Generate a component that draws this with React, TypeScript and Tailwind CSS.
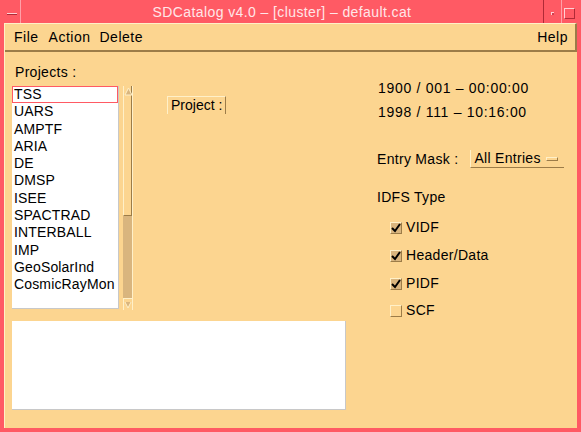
import React from "react";

const projects = [
  "TSS",
  "UARS",
  "AMPTF",
  "ARIA",
  "DE",
  "DMSP",
  "ISEE",
  "SPACTRAD",
  "INTERBALL",
  "IMP",
  "GeoSolarInd",
  "CosmicRayMon",
];

function Check({ checked, label, mt }: { checked: boolean; label: string; mt: string }) {
  return (
    <div className={`flex items-center h-[17px] ${mt}`}>
      <div
        className={`ml-[13px] w-[12px] h-[12px] border border-t-[#fff0c8] border-l-[#fff0c8] border-r-[#9c7c48] border-b-[#9c7c48] flex items-center justify-center ${
          checked ? "bg-[#d9b57e]" : "bg-[#fcd590]"
        }`}
      >
        {checked && (
          <svg width="10" height="10" viewBox="0 0 10 10">
            <path d="M1 5 L4 8 L9 1" stroke="#000" strokeWidth="2" fill="none" />
          </svg>
        )}
      </div>
      <span className="ml-[4px] tracking-[0.3px]">{label}</span>
    </div>
  );
}

export default function App() {
  return (
    <div className="w-[581px] h-[432px] bg-[#ff5a64] flex flex-col font-['Liberation_Sans',sans-serif] text-[14px] leading-[17px] text-black overflow-hidden">
      {/* Title bar */}
      <div className="h-[23px] flex shrink-0">
        <div className="w-[21px] border-r border-r-[#ffa0a8] flex items-center justify-center pl-[4px] pt-[4px]">
          <div className="w-[10px] h-[2px] border-t border-t-[#ffd0d4] border-b border-b-[#b02a36]" />
        </div>
        <div className="flex-1 flex items-center justify-center pt-[2px] text-[#ffe6e8] text-[14px] tracking-[0.4px]">
          SDCatalog v4.0 – [cluster] – default.cat
        </div>
        <div className="w-[18px] border-l border-l-[#b02a36] flex items-center justify-center pt-[4px]">
          <div className="w-[3px] h-[3px] border-t border-l border-t-[#ffd0d4] border-l-[#ffd0d4] bg-[#d04050]" />
        </div>
        <div className="w-[20px] border-l border-l-[#ffa0a8] flex items-start pl-[2px] pt-[8px]">
          <div className="w-[11px] h-[11px] border border-t-[#ffd0d4] border-l-[#ffd0d4] border-r-[#b02a36] border-b-[#b02a36]" />
        </div>
      </div>

      {/* Client area */}
      <div className="flex-1 mx-[4px] mb-[4px] bg-[#fcd590] flex flex-col border-l border-l-[#fff0c8]">
        {/* Menu bar */}
        <div className="h-[29px] flex items-center px-[9px] border-t border-t-[#fff0c8] border-b-2 border-b-[#9c7c48] border-r-2 border-r-[#9c7c48] tracking-[0.5px]">
          <span>File</span>
          <span className="ml-[10px]">Action</span>
          <span className="ml-[9px]">Delete</span>
          <span className="ml-auto mr-[-2px]">Help</span>
        </div>

        {/* Body */}
        <div className="flex flex-1 pl-[7px]">
          {/* Left part */}
          <div className="w-[334px] flex flex-col pt-[12px]">
            <div className="pl-[3px] tracking-[0.3px]">Projects :</div>
            <div className="flex mt-[5px]">
              {/* Listbox */}
              <div className="w-[107px] h-[223px] bg-white border-r border-b border-r-[#c8c8c8] border-b-[#c8c8c8] flex flex-col">
                {projects.map((p, i) => (
                  <div
                    key={p}
                    className={`h-[17.3px] leading-[17.3px] pl-[2px] tracking-[0.15px] ${
                      i === 0 ? "outline outline-1 outline-[#ff5a64] -outline-offset-1" : ""
                    }`}
                  >
                    {p}
                  </div>
                ))}
              </div>
              {/* Scrollbar */}
              <div className="ml-[4px] w-[10px] h-[224px] bg-[#d9b57e] flex flex-col border-r border-r-[#fff0c8]">
                <div className="h-[130px] bg-[#fcd590] border-l border-r border-b border-l-[#fff0c8] border-r-[#9c7c48] border-b-[#9c7c48] flex flex-col">
                  <svg width="9" height="9" viewBox="0 0 9 9" className="mt-[1px]">
                    <path d="M4.5 1 L8 8 L1 8 Z" fill="#d9b57e" stroke="#fff0c8" strokeWidth="1" />
                  </svg>
                </div>
                <div className="flex-1" />
                <div className="h-[12px] bg-[#fcd590] border-l border-t border-l-[#fff0c8] border-t-[#fff0c8] flex items-center justify-center">
                  <svg width="8" height="8" viewBox="0 0 8 8">
                    <path d="M1 1 L4 7 L7 1" fill="#d9b57e" stroke="#fff0c8" strokeWidth="1" />
                  </svg>
                </div>
              </div>
              {/* Project label */}
              <div className="ml-[34px] mt-[10px] h-[18px] flex items-center px-[3px] border-l border-t border-r border-l-[#fff0c8] border-t-[#fff0c8] border-r-[#9c7c48] self-start">
                Project :
              </div>
            </div>
            {/* Text area */}
            <div className="mt-[11px] w-[334px] h-[89px] bg-white border-r border-b border-r-[#c8c8c8] border-b-[#c8c8c8]" />
          </div>

          {/* Right part */}
          <div className="ml-[31px] flex flex-col pt-[28px]">
            <div className="pl-[1px] tracking-[0.7px]">1900 / 001 – 00:00:00</div>
            <div className="pl-[1px] mt-[7px] tracking-[0.7px]">1998 / 111 – 10:16:00</div>
            <div className="flex items-center mt-[29px]">
              <span className="tracking-[0.3px]">Entry Mask :</span>
              <div className="ml-[12px] w-[94px] h-[18px] flex items-center pl-[3px] border-l border-b border-l-[#fff0c8] border-b-[#9c7c48]">
                <span className="tracking-[0.3px]">All Entries</span>
                <div className="ml-[5px] w-[12px] h-[4px] bg-[#fcd590] border-t border-b border-t-[#fff0c8] border-b-[#9c7c48] border-l border-l-[#fff0c8] border-r border-r-[#9c7c48]" />
              </div>
            </div>
            <div className="mt-[21px] tracking-[0.3px]">IDFS Type</div>
            <Check checked label="VIDF" mt="mt-[13px]" />
            <Check checked label="Header/Data" mt="mt-[11px]" />
            <Check checked label="PIDF" mt="mt-[11px]" />
            <Check checked={false} label="SCF" mt="mt-[10px]" />
          </div>
        </div>
      </div>
    </div>
  );
}
